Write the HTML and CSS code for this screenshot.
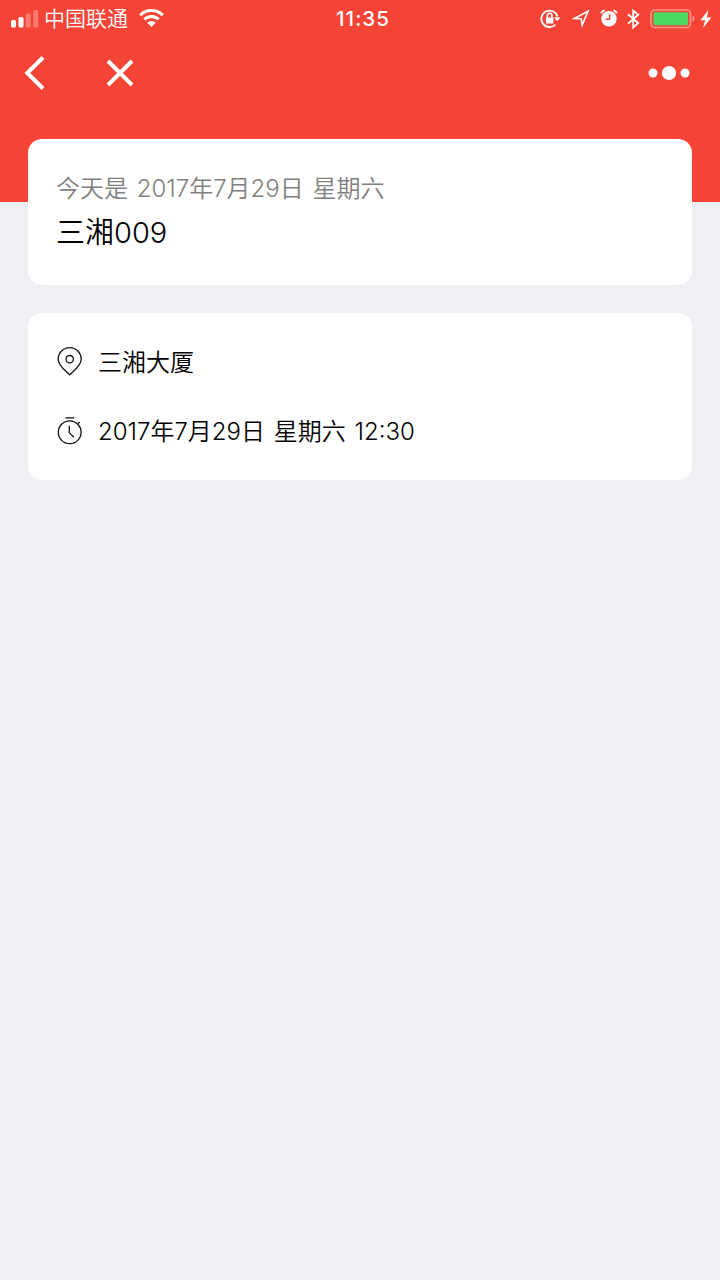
FILE: index.html
```html
<!DOCTYPE html>
<html lang="zh-CN">
<head>
<meta charset="utf-8">
<title>三湘009</title>
<link rel="stylesheet" href="styles.css">
</head>
<body>
<header class="header">
  <div class="status">
    <div class="status-left">
      <svg class="signal" width="28" height="19" viewBox="0 0 28 19">
        <rect x="0" y="10" width="5" height="7.5" rx="1.5"/>
        <rect x="7.5" y="7" width="5" height="10.5" rx="1.5"/>
        <rect class="off" x="14.8" y="3.5" width="5" height="14" rx="1.5"/>
        <rect class="off" x="22.2" y="0" width="5" height="17.5" rx="1.5"/>
      </svg>
      <span class="carrier">中国联通</span>
      <svg class="wifi" width="25" height="20" viewBox="0 0 25 20">
        <path class="arc" d="M1.2 6.2a16 16 0 0 1 22.6 0M5.3 10.4a10.2 10.2 0 0 1 14.4 0"/>
        <path d="M8.2 13.8a6.1 6.1 0 0 1 8.6 0L12.5 18z"/>
      </svg>
    </div>
    <span class="time">11:35</span>
    <div class="status-right">
      <svg class="lock" width="21" height="21" viewBox="0 0 21 21">
        <path class="line" d="M17.4 7.4A8.2 8.2 0 1 0 15.4 15.6"/>
        <path d="M14 8.2h6.4l-3.2 4zM6 8.4h7.4v6.2H6z"/>
        <path class="line thin" d="M7.4 9V6.6a2.3 2.3 0 0 1 4.6 0V9"/>
      </svg>
      <svg class="location" width="18" height="20" viewBox="0 0 18 20">
        <path class="line thin" d="M2 9.6L16 2.2 10.2 16 9.2 9.8z"/>
      </svg>
      <svg class="alarm" width="18" height="20" viewBox="0 0 18 20">
        <circle cx="9" cy="9.8" r="7.7"/>
        <path class="line" d="M1.2 4.4Q1.8 2 4.6 1.5M16.8 4.4Q16.2 2 13.4 1.5"/>
        <path class="hand" d="M9.6 5v5.2H5.5"/>
      </svg>
      <svg class="bluetooth" width="13" height="21" viewBox="0 0 13 21">
        <path class="line" d="M1 5.2l10.2 8.8-5 4.4V1.6l5 4.2L1 14.6"/>
      </svg>
      <svg class="battery" width="45" height="21" viewBox="0 0 45 21">
        <rect class="shell" x="1" y="1" width="39.5" height="17.5" rx="4"/>
        <rect class="charge" x="3.5" y="3.2" width="34.5" height="13" rx="1.6"/>
        <path class="off tip" d="M42.5 6.5c2.5 1 2.5 5.5 0 6.5z"/>
      </svg>
      <svg class="bolt" width="12" height="19" viewBox="0 0 12 19">
        <path d="M8.4 0L.4 10.2h4.8L3 18 11.4 7.4H6.8z"/>
      </svg>
    </div>
  </div>
  <nav class="nav">
    <svg class="back" width="22" height="36" viewBox="0 0 22 36">
      <path d="M19 2.5L3.3 18 19 33.5"/>
    </svg>
    <svg class="close" width="28" height="28" viewBox="0 0 28 28">
      <path d="M2 2l24 24M26 2L2 26"/>
    </svg>
    <svg class="more" width="42" height="16" viewBox="0 0 42 16">
      <circle cx="5" cy="8" r="4.5"/>
      <circle cx="21" cy="8" r="7.1"/>
      <circle cx="37" cy="8" r="4.5"/>
    </svg>
  </nav>
</header>

<main class="content">
  <section class="card today">
    <p class="date">今天是 2017年7月29日 星期六</p>
    <h1 class="name">三湘009</h1>
  </section>

  <section class="card detail">
    <div class="row">
      <svg class="icon" width="26" height="30" viewBox="0 0 26 30">
        <path d="M12.7 28.8C9.4 25.2 1.2 20 1.2 13.2a11.5 11.5 0 0 1 23 0C24.2 20 16 25.2 12.7 28.8z"/>
        <circle cx="12.7" cy="13.2" r="3.7"/>
      </svg>
      <span>三湘大厦</span>
    </div>
    <div class="row">
      <svg class="icon" width="26" height="30" viewBox="0 0 26 30">
        <circle cx="12.7" cy="17.3" r="11.4"/>
        <path d="M8.2 2.8h9M21 8.6l1.8-1.6M12.3 10.8v6.8l4.6 4.7"/>
      </svg>
      <span>2017年7月29日 星期六 12:30</span>
    </div>
  </section>
</main>
</body>
</html>
```

FILE: styles.css
```css
body {
  margin: 0;
  min-height: 1280px;
  background: #efeff4;
  color: #000;
  font-family: "Inter", "Noto Sans CJK SC", sans-serif;
}

/* header */

.header {
  height: 202px;
  background: #f54336;
  color: #fff;
}

.header svg {
  display: block;
  flex: none;
  fill: #fff;
}

.status {
  display: grid;
  grid-template-columns: 1fr auto 1fr;
  align-items: center;
  height: 37px;
  padding: 0 8px 0 11px;
}

.status-left,
.status-right {
  display: flex;
  align-items: center;
}

.status-right {
  justify-content: flex-end;
}

.carrier {
  margin: 0 11px 0 5px;
  font-size: 21px;
  line-height: 38px;
  font-weight: 350;
}

.time {
  padding-left: 3px;
  font-size: 20.5px;
  line-height: 36px;
  font-weight: 550;
  letter-spacing: 1px;
}

.header .off {
  fill: rgba(255, 255, 255, 0.3);
}

.header .tip {
  fill: rgba(255, 255, 255, 0.45);
}

.header .arc {
  fill: none;
  stroke: #fff;
  stroke-width: 3;
}

.header .line {
  fill: none;
  stroke: #fff;
  stroke-width: 1.8;
}

.header .thin {
  stroke-width: 1.6;
}

.header .hand {
  fill: none;
  stroke: #f54336;
  stroke-width: 1.4;
}

.header .shell {
  fill: none;
  stroke: rgba(255, 255, 255, 0.45);
  stroke-width: 1.6;
}

.header .charge {
  fill: #4cd964;
}

.location {
  margin-left: 11px;
}

.alarm {
  margin-left: 10px;
}

.bluetooth {
  margin-left: 9px;
}

.battery {
  margin-left: 10px;
}

.bolt {
  margin-left: 5px;
}

.nav {
  display: flex;
  align-items: center;
  height: 72px;
  padding: 0 30px 0 24px;
}

.nav .back,
.nav .close {
  fill: none;
  stroke: #fff;
  stroke-width: 4;
}

.nav .close {
  margin-left: 60px;
}

.nav .more {
  margin-left: auto;
}

/* cards */

.content {
  margin-top: -63px;
  padding: 0 28px;
}

.card {
  box-sizing: border-box;
  border-radius: 14px;
  background: #fff;
}

.today {
  height: 146px;
  padding: 31px 28px 0;
}

.date {
  margin: 0;
  color: #808080;
  font-size: 24px;
  line-height: 38px;
  font-weight: 350;
  word-spacing: 2px;
}

.name {
  margin: 0;
  font-size: 29px;
  line-height: 50px;
  font-weight: 350;
}

.detail {
  height: 167px;
  margin-top: 28px;
  padding: 13px 28px 0 29px;
}

.row {
  display: flex;
  align-items: center;
  height: 69px;
  font-size: 24px;
  font-weight: 350;
  word-spacing: 2px;
}

.icon {
  margin-right: 15px;
  fill: none;
  stroke: #111;
  stroke-width: 1.3;
}
```
